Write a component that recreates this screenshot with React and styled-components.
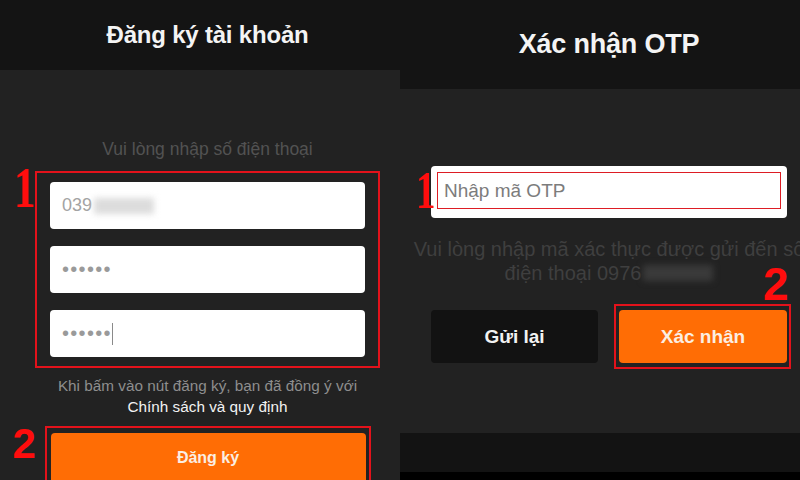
import React from 'react'
import styled, { createGlobalStyle } from 'styled-components'

const GlobalStyle = createGlobalStyle`
    html, body {
        margin: 0;
        padding: 0;
        background: #000;
    }
    body {
        font-family: "Liberation Sans", Arial, sans-serif;
    }
`;

const Screen = styled.div`
    width: 800px;
    height: 480px;
    display: flex;
    overflow: hidden;
`;

const Panel = styled.div`
    width: 400px;
    height: 480px;
    display: flex;
    flex-direction: column;
    overflow: hidden;
    background-color: #222222;
`;

const Header = styled.div`
    height: ${props => props.h}px;
    flex-shrink: 0;
    background-color: #141414;
    display: flex;
    align-items: center;
    justify-content: center;
    padding-left: ${props => props.shift}px;
`;

const Title = styled.h1`
    margin: 0;
    color: #f4f4f4;
    font-weight: 700;
    font-size: ${props => props.size}px;
    letter-spacing: -0.2px;
`;

const Body = styled.div`
    flex: 1;
    display: flex;
    flex-direction: column;
    align-items: center;
    padding-top: ${props => props.top}px;
    padding-left: ${props => props.shift}px;
`;

const Hint = styled.p`
    margin: 0;
    height: 20px;
    line-height: 20px;
    font-size: 17.5px;
    color: #525252;
`;

const Marked = styled.div`
    position: relative;
    margin-top: ${props => props.mt || 0}px;
`;

/* red step numbers drawn over the screenshot */
const Marker = styled.span`
    position: absolute;
    left: ${props => props.x}px;
    top: ${props => props.y}px;
    color: #ff0d0d;
    font-weight: 700;
    line-height: 0.75;
    font-size: ${props => props.size}px;
    font-family: ${props => props.serif ? '"Liberation Serif", serif' : '"Liberation Sans", Arial, sans-serif'};
    ${props => props.serif && 'transform: scaleX(0.75); transform-origin: left top;'}
`;

const RedBox = styled.div`
    width: 345px;
    box-sizing: border-box;
    border: 2px solid #e3121b;
    padding: 9px 13px;
    display: flex;
    flex-direction: column;
    gap: 17px;
`;

const Frame = styled.div`
    border: 2px solid #e3121b;
    padding: ${props => props.pad};
    display: flex;
`;

const Field = styled.div`
    height: 47px;
    background: #ffffff;
    border-radius: 4px;
    display: flex;
    align-items: center;
    padding-left: 12px;
    font-size: 18px;
    color: #a3a3a3;
`;

const Blur = styled.span`
    display: inline-block;
    width: ${props => props.w}px;
    height: 16px;
    margin-left: 2px;
    background: ${props => props.c};
    filter: blur(3px);
`;

const Dots = styled.span`
    font-size: 20px;
    letter-spacing: 1.3px;
    color: #9a9a9a;
`;

const Caret = styled.span`
    display: inline-block;
    width: 1px;
    height: 22px;
    background: #8a8a8a;
`;

const Terms = styled.p`
    margin: 7px 0 0;
    text-align: center;
    font-size: 15.3px;
    line-height: 21px;
    color: #8e8e8e;
    white-space: nowrap;
`;

const Policy = styled.span`
    display: block;
    color: #f2f2f2;
    font-size: 15.3px;
`;

const OrangeButton = styled.button`
    border: none;
    border-radius: 4px;
    background: #ff6d05;
    color: #fbeee2;
    font-family: "Liberation Sans", Arial, sans-serif;
    font-weight: 700;
    font-size: ${props => props.size}px;
    padding: 0;
`;

const WideButton = styled(OrangeButton)`
    width: 315px;
    height: 50px;
`;

const OtpBox = styled.div`
    width: 356px;
    height: 52px;
    box-sizing: border-box;
    background: #ffffff;
    border-radius: 4px;
    padding: 6px 6px 9px;
    display: flex;
`;

const OtpInner = styled.div`
    flex: 1;
    border: 1.5px solid #dd1d24;
    display: flex;
    align-items: center;
    padding-left: 6px;
    font-size: 19px;
    color: #7c7c7c;
`;

const Desc = styled.div`
    margin-top: 19px;
    width: 356px;
    display: flex;
    flex-direction: column;
    align-items: center;
    font-size: 20px;
    line-height: 24px;
    color: #3f3f3f;
`;

const Line = styled.span`
    white-space: nowrap;
    display: flex;
    align-items: center;
`;

const ButtonRow = styled.div`
    margin-top: 19px;
    width: 356px;
    display: grid;
    grid-template-columns: 167px 177px;
    column-gap: 16px;
    align-items: center;
`;

const DarkButton = styled.button`
    height: 53px;
    border: none;
    border-radius: 4px;
    background: #121212;
    color: #f2f2f2;
    font-family: "Liberation Sans", Arial, sans-serif;
    font-weight: 700;
    font-size: 19px;
`;

const ConfirmButton = styled(OrangeButton)`
    width: 168px;
    height: 53px;
`;

const Footer = styled.div`
    height: 39px;
    flex-shrink: 0;
    background: #131313;
`;

const Bottom = styled.div`
    height: 8px;
    flex-shrink: 0;
    background: #000;
`;

function App () {
    return (
        <Screen>
            <GlobalStyle />
            <Panel>
                <Header h={70} shift={15}>
                    <Title size={24}>Đăng ký tài khoản</Title>
                </Header>
                <Body top={69} shift={15}>
                    <Hint>Vui lòng nhập số điện thoại</Hint>
                    <Marked mt={12}>
                        <Marker serif x={-21} y={-5} size={58}>1</Marker>
                        <RedBox>
                            <Field>039<Blur w={60} c="#dcdcdc" /></Field>
                            <Field><Dots>••••••</Dots></Field>
                            <Field><Dots>••••••</Dots><Caret /></Field>
                        </RedBox>
                    </Marked>
                    <Terms>
                        Khi bấm vào nút đăng ký, bạn đã đồng ý với
                        <Policy>Chính sách và quy định</Policy>
                    </Terms>
                    <Marked mt={9}>
                        <Marker x={-32} y={2} size={42}>2</Marker>
                        <Frame pad="5px 3px 0 4px">
                            <WideButton size={16}>Đăng ký</WideButton>
                        </Frame>
                    </Marked>
                </Body>
            </Panel>
            <Panel>
                <Header h={89} shift={18}>
                    <Title size={27}>Xác nhận OTP</Title>
                </Header>
                <Body top={77} shift={18}>
                    <Marked>
                        <Marker serif x={-15} y={5} size={52}>1</Marker>
                        <OtpBox>
                            <OtpInner>Nhập mã OTP</OtpInner>
                        </OtpBox>
                    </Marked>
                    <Desc>
                        <Line>Vui lòng nhập mã xác thực được gửi đến số</Line>
                        <Line>điện thoại 0976<Blur w={70} c="#3a3a3a" /></Line>
                    </Desc>
                    <ButtonRow>
                        <DarkButton>Gửi lại</DarkButton>
                        <Marked>
                            <Marker x={149} y={-37} size={46}>2</Marker>
                            <Frame pad="4px 2px 4px 3px">
                                <ConfirmButton size={19}>Xác nhận</ConfirmButton>
                            </Frame>
                        </Marked>
                    </ButtonRow>
                </Body>
                <Footer />
                <Bottom />
            </Panel>
        </Screen>
    )
}

export default App;
